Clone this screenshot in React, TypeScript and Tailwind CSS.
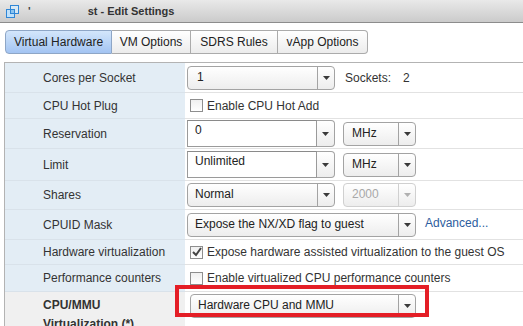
import React from "react";

const Arrow = ({ color = "#3a3a3a" }: { color?: string }) => (
  <svg width="7" height="4" viewBox="0 0 7 4">
    <path d="M0 0h7L3.5 4z" fill={color} />
  </svg>
);

const Select = ({
  text,
  w,
  disabled = false,
  pl = "pl-[9px]",
}: {
  text: string;
  w: string;
  disabled?: boolean;
  pl?: string;
}) => (
  <div
    className={`flex h-[24px] ${w} rounded-[4px] border ${
      disabled ? "border-[#d0d0d0] text-[#a8a8a8]" : "border-[#a3a3a3] text-[#222]"
    } bg-gradient-to-b from-white to-[#ededed]`}
  >
    <div className={`flex-1 ${pl} leading-[21px]`}>{text}</div>
    <div
      className={`flex w-[17px] items-center justify-center border-l ${
        disabled ? "border-[#d0d0d0]" : "border-[#a3a3a3]"
      }`}
    >
      <Arrow color={disabled ? "#b0b0b0" : "#3a3a3a"} />
    </div>
  </div>
);

const Combo = ({ text }: { text: string }) => (
  <div className="flex h-[27px] w-[148px]">
    <div className="flex-1 border border-[#9a9a9a] border-t-[#8a8a8a] bg-white pl-[7px] leading-[18px] text-[#222]">
      {text}
    </div>
    <div className="flex w-[18px] items-center justify-center rounded-r-[4px] border border-l-0 border-[#a3a3a3] bg-gradient-to-b from-white to-[#ededed]">
      <Arrow />
    </div>
  </div>
);

const Checkbox = ({ checked = false }: { checked?: boolean }) => (
  <div className="relative h-[13px] w-[13px] border border-[#8e8e8e] bg-gradient-to-b from-[#f0f0f0] to-white">
    {checked && (
      <svg className="absolute left-[0px] top-[-1px]" width="12" height="12" viewBox="0 0 12 12">
        <path d="M2 6l3 3 5-7" fill="none" stroke="#444" strokeWidth="2" />
      </svg>
    )}
  </div>
);

const Row = ({
  label,
  h,
  children,
  valuePl = "pl-[2px]",
}: {
  label: string;
  h: string;
  children: React.ReactNode;
  valuePl?: string;
}) => (
  <div className={`flex ${h}`}>
    <div className="flex w-[180px] items-center border-b border-[#d9e2ea] bg-[#e3edf5] pl-[38px] text-[#333]">
      {label}
    </div>
    <div className={`flex flex-1 items-center border-b border-[#e2e2e2] ${valuePl}`}>{children}</div>
  </div>
);

export default function App() {
  return (
    <div
      className="relative h-[326px] w-[523px] overflow-hidden bg-white text-[12px] text-[#333]"
      style={{ fontFamily: '"Liberation Sans", Arial, sans-serif' }}
    >
      {/* Title bar */}
      <div className="flex h-[23px] items-center border-b border-[#8c8c8c] bg-gradient-to-b from-[#e9e9e9] to-[#cbcbcb]">
        <svg className="ml-[6px]" width="13" height="13" viewBox="0 0 13 13">
          <rect x="0.5" y="4.5" width="8" height="8" fill="#bfe0fa" stroke="#2f86d6" />
          <rect x="4.5" y="0.5" width="8" height="8" fill="#d6ecfc" fillOpacity="0.7" stroke="#2f86d6" />
          <rect x="4.5" y="4.5" width="4" height="4" fill="#8cc4f0" stroke="#2f86d6" />
        </svg>
        <span className="ml-[9px] text-[11px] font-bold text-[#444]">'</span>
        <span className="ml-[57px] text-[11px] font-bold text-[#333]">st - Edit Settings</span>
      </div>

      {/* Tabs */}
      <div className="ml-[5px] mt-[7px] flex h-[24px] w-[363px]">
        <div className="flex w-[107px] items-center justify-center rounded-l-[4px] border border-[#8ea6c6] bg-gradient-to-b from-[#d3e6fb] to-[#a3c4f2] text-[#222]">
          Virtual Hardware
        </div>
        <div className="flex w-[79px] items-center justify-center border border-l-0 border-[#ababab] bg-gradient-to-b from-white to-[#ececec] text-[#222]">
          VM Options
        </div>
        <div className="flex w-[87px] items-center justify-center border border-l-0 border-[#ababab] bg-gradient-to-b from-white to-[#ececec] text-[#222]">
          SDRS Rules
        </div>
        <div className="flex w-[90px] items-center justify-center rounded-r-[4px] border border-l-0 border-[#ababab] bg-gradient-to-b from-white to-[#ececec] text-[#222]">
          vApp Options
        </div>
      </div>

      {/* Table */}
      <div className="ml-[4px] mt-[8px] flex flex-col border-l border-t border-[#b3b3b3]">
        <Row label="Cores per Socket" h="h-[30px]">
          <Select text="1" w="w-[148px]" />
          <span className="ml-[10px]">Sockets:</span>
          <span className="ml-[12px]">2</span>
        </Row>
        <Row label="CPU Hot Plug" h="h-[26px]" valuePl="pl-[5px]">
          <Checkbox />
          <span className="ml-[4px]">Enable CPU Hot Add</span>
        </Row>
        <Row label="Reservation" h="h-[30px]">
          <Combo text="0" />
          <div className="ml-[8px]">
            <Select text="MHz" w="w-[73px]" pl="pl-[8px]" />
          </div>
        </Row>
        <Row label="Limit" h="h-[32px]">
          <Combo text="Unlimited" />
          <div className="ml-[8px]">
            <Select text="MHz" w="w-[73px]" pl="pl-[8px]" />
          </div>
        </Row>
        <Row label="Shares" h="h-[29px]">
          <Select text="Normal" w="w-[148px]" pl="pl-[7px]" />
          <div className="ml-[8px]">
            <Select text="2000" w="w-[73px]" pl="pl-[8px]" disabled />
          </div>
        </Row>
        <Row label="CPUID Mask" h="h-[30px]">
          <Select text="Expose the NX/XD flag to guest" w="w-[229px]" pl="pl-[7px]" />
          <span className="ml-[9px] mb-[4px] text-[#2d5d9e]">Advanced...</span>
        </Row>
        <Row label="Hardware virtualization" h="h-[25px]" valuePl="pl-[5px]">
          <Checkbox checked />
          <span className="ml-[4px]">Expose hardware assisted virtualization to the guest OS</span>
        </Row>
        <Row label="Performance counters" h="h-[27px]" valuePl="pl-[5px]">
          <Checkbox />
          <span className="ml-[4px]">Enable virtualized CPU performance counters</span>
        </Row>
        <div className="flex h-[40px]">
          <div className="w-[180px] bg-[#f0f0f0] pl-[38px] pt-[4px] text-[12px] font-bold leading-[19px] text-[#333]">
            CPU/MMU
            <br />
            Virtualization (*)
          </div>
          <div className="flex-1 pl-[5px] pt-[2px]">
            <Select text="Hardware CPU and MMU" w="w-[226px]" pl="pl-[7px]" />
          </div>
        </div>
      </div>

      {/* Red annotation */}
      <div className="absolute left-[175px] top-[285px] h-[32px] w-[254px] border-[4px] border-[#e41e26]" />
    </div>
  );
}
